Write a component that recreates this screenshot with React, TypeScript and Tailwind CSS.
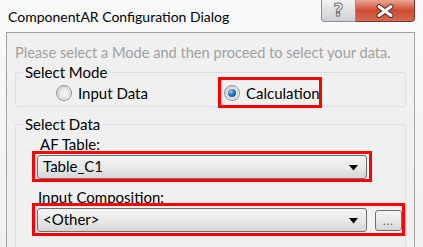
import React from "react";

const font = { fontFamily: 'Lato, "Open Sans", "DejaVu Sans", sans-serif' };

function Radio({ checked }: { checked?: boolean }) {
  return (
    <span className="relative inline-flex h-[16px] w-[16px] shrink-0 items-center justify-center rounded-full border border-[#8c8f92] bg-gradient-to-br from-[#d4d4d4] via-[#f0f0f0] to-[#ffffff]">
      <span className="flex h-[12px] w-[12px] items-center justify-center rounded-full border border-[#c8c8c8] bg-gradient-to-br from-[#e2e2e2] to-[#fafafa]">
        {checked && (
          <span className="h-[8px] w-[8px] rounded-full bg-[radial-gradient(circle_at_35%_30%,#9fd0f5_0%,#2a74c0_45%,#0d3b78_100%)]" />
        )}
      </span>
    </span>
  );
}

function Combo({ value }: { value: string }) {
  return (
    <div className="relative flex h-[24px] w-[330px] shrink-0 items-center rounded-[3px] border border-[#707070] bg-gradient-to-b from-[#f3f3f3] via-[#e9e9e9] to-[#d6d6d6] pl-[5px] text-[15px] leading-none text-black">
      <span className="-mt-[2px]">{value}</span>
      <svg className="absolute right-[8px] top-[9px]" width="9" height="6" viewBox="0 0 9 6">
        <path d="M0 0 H9 L4.5 5.5 Z" fill="#000" />
      </svg>
    </div>
  );
}

export default function App() {
  return (
    <div style={font} className="relative flex h-[247px] w-[423px] flex-col overflow-hidden bg-gradient-to-b from-[#f9fafb] to-[#eef0f2]">
      {/* title bar */}
      <div className="flex h-[32px] shrink-0 items-start justify-between">
        <div className="whitespace-nowrap pl-[8px] pt-[7px] text-[14px] leading-[20px] text-black">ComponentAR Configuration Dialog</div>
        <div className="mr-[8px] flex">
          <div className="flex h-[22px] w-[35px] items-center justify-center rounded-bl-[4px] border border-t-0 border-[#8d8f94] bg-gradient-to-b from-[#f2f2f2] via-[#e0e0e0] to-[#cfd1d4]">
            <span className="text-[17px] font-bold leading-none text-white [-webkit-text-stroke:1px_#6d6f73]" style={{ fontFamily: '"DejaVu Sans", sans-serif' }}>?</span>
          </div>
          <div className="flex h-[22px] w-[59px] items-center justify-center rounded-br-[4px] border border-l-0 border-t-0 border-[#7a3a30] bg-gradient-to-b from-[#e9a493] via-[#cf4a32] to-[#d56a4f]">
            <svg width="20" height="14" viewBox="0 0 20 14">
              <path d="M4 2.5 L16 11.5 M16 2.5 L4 11.5" stroke="#5a2a22" strokeWidth="5" strokeLinecap="round" />
              <path d="M4 2.5 L16 11.5 M16 2.5 L4 11.5" stroke="#ffffff" strokeWidth="3" strokeLinecap="round" />
            </svg>
          </div>
        </div>
      </div>

      {/* client panel */}
      <div className="ml-[6px] mr-[8px] flex-1 border border-b-0 border-[#a3a3a3] bg-[#f0f0f0]">
        <div className="mt-[10px] whitespace-nowrap pl-[8px] text-[14.6px] leading-[20px] text-[#a0a0a0]">
          Please select a Mode and then proceed to select your data.
        </div>

        {/* Select Mode */}
        <fieldset className="mx-[8px] rounded-[3px] border border-[#d5dfe5] pb-[5px]">
          <legend className="ml-[6px] px-[3px] text-[15px] leading-[18px] text-black">Select Mode</legend>
          <div className="flex items-center pl-[40px] pt-[4px] text-[15px] text-black">
            <label className="flex h-[16px] w-[168px] items-center gap-[6px]">
              <Radio />
              <span className="leading-none">Input Data</span>
            </label>
            <label className="relative flex h-[16px] items-center gap-[6px]">
              <Radio checked />
              <span className="leading-none">Calculation</span>
              <span className="pointer-events-none absolute -left-[6px] -top-[8px] h-[31px] w-[104px] border-[3px] border-[#ff0000]" />
            </label>
          </div>
        </fieldset>

        {/* Select Data */}
        <fieldset className="mx-[8px] mt-[8px] rounded-[3px] border border-[#d5dfe5] pb-[20px]">
          <legend className="ml-[6px] px-[3px] text-[15px] leading-[18px] text-black">Select Data</legend>
          <div className="mt-[1px] pl-[24px] text-[15px] leading-[20px] text-black">AF Table:</div>
          <div className="mt-[1px] pl-[21px]">
            <div className="relative w-[330px]">
              <Combo value="Table_C1" />
              <span className="pointer-events-none absolute -bottom-[3px] -left-[5px] -right-[5px] -top-[4px] border-[3px] border-[#ff0000]" />
            </div>
          </div>
          <div className="mt-[8px] pl-[22px] text-[15px] leading-[20px] text-black">Input Composition:</div>
          <div className="mt-[1px] pl-[21px]">
            <div className="relative flex w-[364px] items-center gap-[8px]">
              <Combo value="<Other>" />
              <div className="flex h-[21px] w-[27px] shrink-0 items-end justify-center rounded-[3px] border border-[#707070] bg-gradient-to-b from-[#f3f3f3] via-[#e9e9e9] to-[#d6d6d6] pb-[4px]">
                <span className="text-[11px] leading-none tracking-[1px] text-[#555]">...</span>
              </div>
              <span className="pointer-events-none absolute -bottom-[4px] -left-[5px] -right-[4px] -top-[5px] border-[3px] border-[#ff0000]" />
            </div>
          </div>
        </fieldset>
      </div>
    </div>
  );
}
